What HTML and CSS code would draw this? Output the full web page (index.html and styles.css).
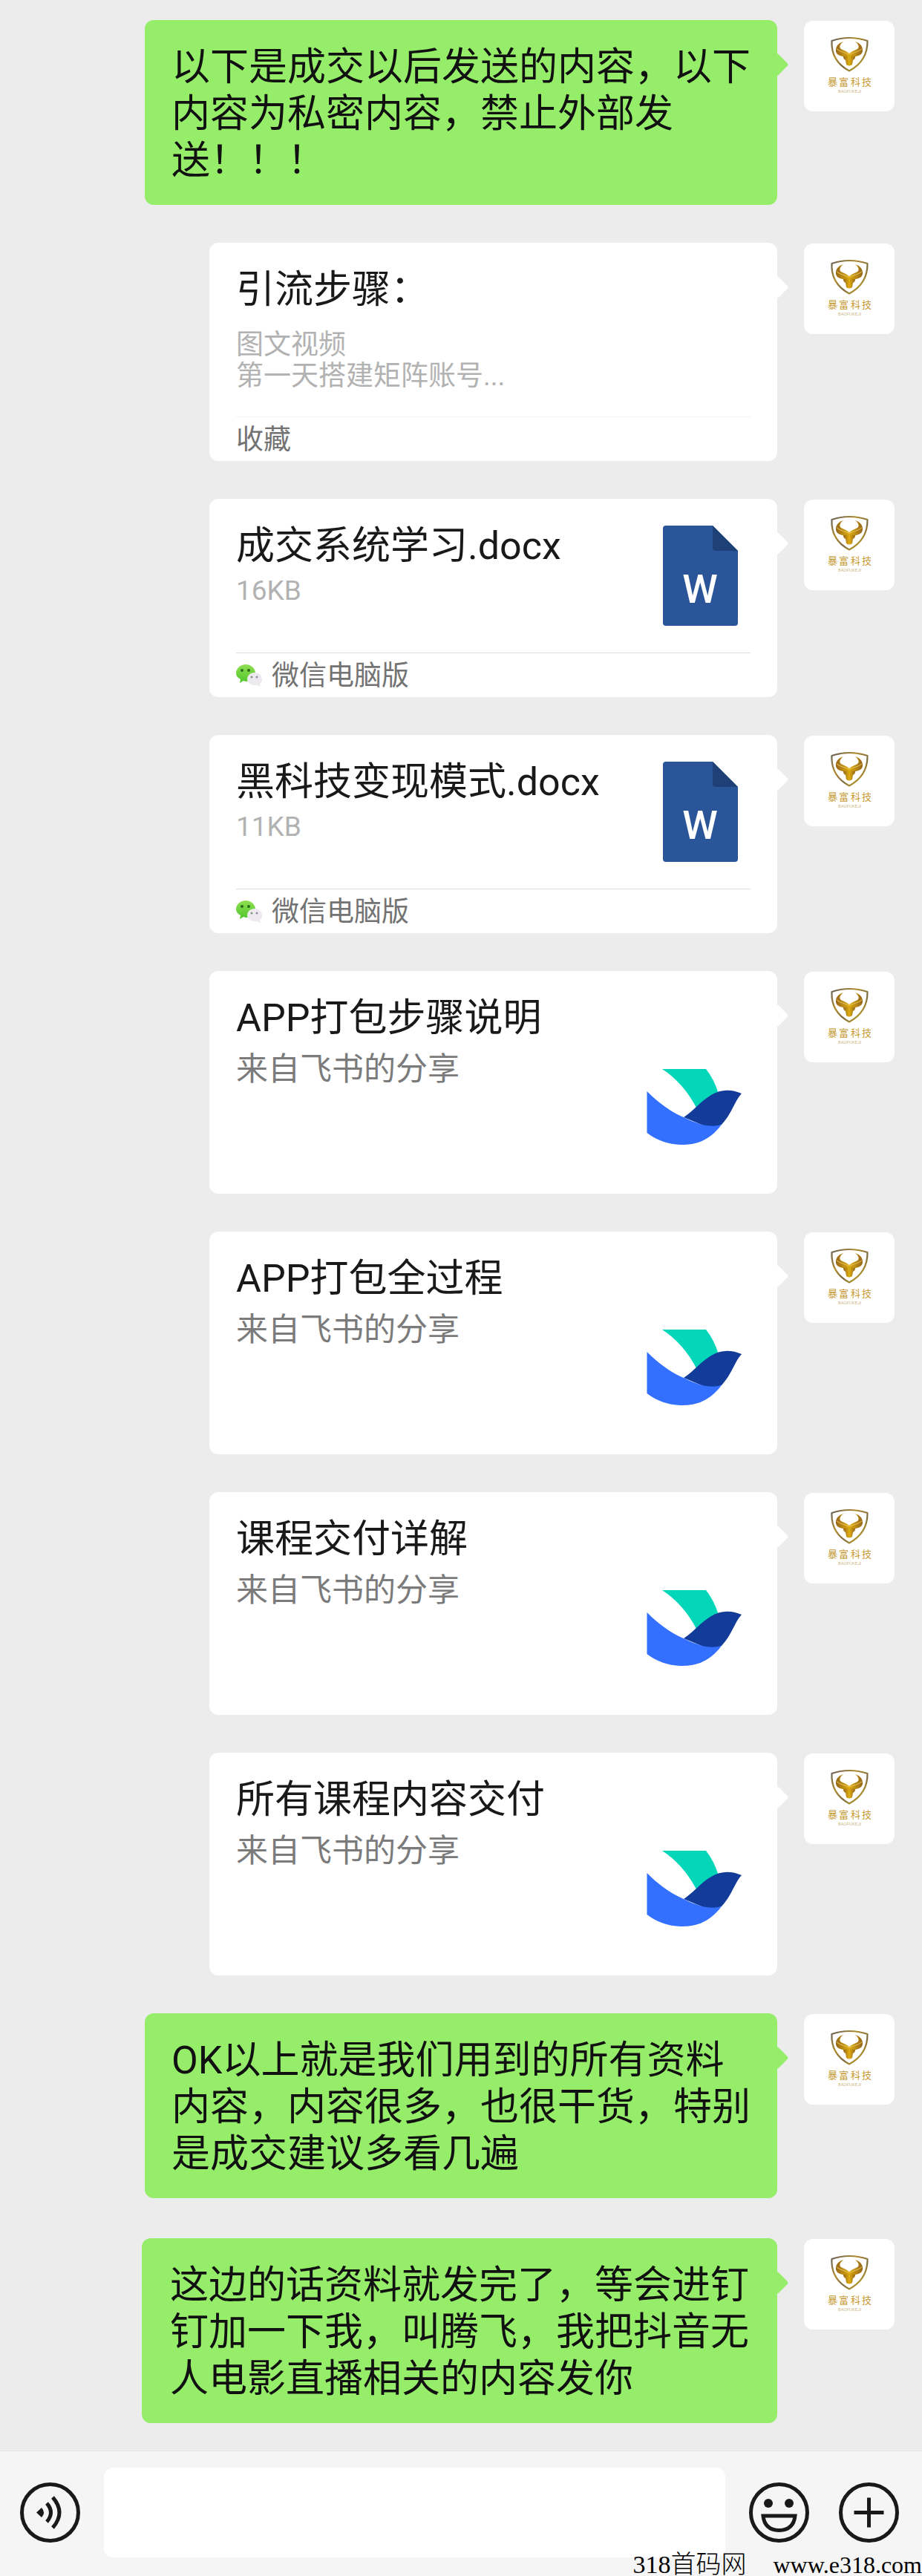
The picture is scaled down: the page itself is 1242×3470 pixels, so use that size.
FILE: index.html
```html
<!DOCTYPE html>
<html lang="zh-CN">
<head>
<meta charset="utf-8">
<meta name="viewport" content="width=device-width, initial-scale=1">
<title>聊天</title>
<link rel="stylesheet" href="styles.css">
</head>
<body>
<svg class="sprite" aria-hidden="true">
  <defs>
    <linearGradient id="gold-edge" x1="0" y1="0" x2="1" y2="1">
      <stop offset="0" stop-color="#66605a"/>
      <stop offset="0.35" stop-color="#b08a2c"/>
      <stop offset="0.6" stop-color="#7d6a40"/>
      <stop offset="1" stop-color="#e6c01c"/>
    </linearGradient>
    <linearGradient id="gold-fill" x1="0" y1="0" x2="1" y2="0">
      <stop offset="0" stop-color="#94651a"/>
      <stop offset="0.5" stop-color="#dfae12"/>
      <stop offset="1" stop-color="#94651a"/>
    </linearGradient>
    <linearGradient id="chat-green" x1="0" y1="0" x2="0" y2="1">
      <stop offset="0" stop-color="#8fe052"/>
      <stop offset="1" stop-color="#4fc62c"/>
    </linearGradient>
  </defs>
  <symbol id="bull" viewBox="0 0 122 122">
    <path d="M37.5 27Q61 19 85.500 27Q86 54 61 67.500Q36 54 37.500 27Z" fill="none" stroke="url(#gold-edge)" stroke-width="2.2" stroke-linejoin="round"/>
    <path d="M53 28C46 30 42.500 35 43 41C44 47 51 48 61 50C71 48 78 47 79 41C79.500 35 76 30 69 28C75 33 75 37 70 39C66 41 63 42 61 44C59 42 56 41 52 39C47 37 47 33 53 28Z" fill="url(#gold-fill)"/>
    <path d="M44 38C49 42 56 43 61 45C66 43 73 42 78 38" fill="none" stroke="#e9c55a" stroke-width="1"/>
    <path d="M53 48Q61 46 69 48Q69 52 66 53L65 59Q61 62 57 59L56 53Q53 52 53 48Z" fill="url(#gold-fill)"/>
  </symbol>
  <symbol id="word-file" viewBox="0 0 101 135">
    <path d="M4 0H67L101 34V131Q101 135 97 135H4Q0 135 0 131V4Q0 0 4 0Z" fill="#2a5699"/>
    <path d="M67 0L101 34H71Q67 34 67 30Z" fill="#1e4076"/>
  </symbol>
  <symbol id="wechat" viewBox="0 0 36 32">
    <path d="M13 0C20 0 26 5 26 12C26 18 20 23 13 23L10 22L5 25L6 20C2 18 0 15 0 12C0 5 6 0 13 0Z" fill="url(#chat-green)"/>
    <circle cx="8" cy="8" r="2" fill="#2c6b1a"/><circle cx="17" cy="8" r="2" fill="#2c6b1a"/>
    <path d="M25 11C31 11 35 15 35 20C35 23 34 25 32 26L33 30L28 28C21 29 15 25 15 20C15 15 19 11 25 11Z" fill="#eceaee"/>
    <circle cx="21" cy="17" r="1.5" fill="#8a9484"/><circle cx="28" cy="17" r="1.5" fill="#9a88a8"/>
  </symbol>
  <symbol id="lark" viewBox="0 0 150 150">
    <path d="M31 24H90Q101 38 106.5 56L77.5 77Q60 43 31 24Z" fill="#03d6b9"/>
    <path d="M60 89C76 78 82 68 97 59C110 51 124 51 138 57C128 68 125 84 111 99L96 104Z" fill="#133c9a"/>
    <path d="M10.5 54C25 69 43 82 61 89.5C82 100 97 103 111 99C92 124 72 126 56 126Q30 125 10.5 110Z" fill="#3370ff"/>
  </symbol>
</svg>

<main class="chat">
  <div class="message">
    <p class="bubble text">以下是成交以后发送的内容，以下内容为私密内容，禁止外部发送！！！</p>
    <svg class="avatar" viewBox="0 0 122 122"><use href="#bull"/><text class="avatar-name" x="32 47 63 78" y="87">暴富科技</text><text class="avatar-latin" x="46" y="97">BAOFUKEJI</text></svg>
  </div>

  <div class="message">
    <a class="bubble card" href="#note">
      <div class="note">
        <h2 class="title">引流步骤：</h2>
        <p class="meta">图文视频<br>第一天搭建矩阵账号...</p>
      </div>
      <div class="card-foot pale">收藏</div>
    </a>
    <svg class="avatar" viewBox="0 0 122 122"><use href="#bull"/><text class="avatar-name" x="32 47 63 78" y="87">暴富科技</text><text class="avatar-latin" x="46" y="97">BAOFUKEJI</text></svg>
  </div>

  <div class="message">
    <a class="bubble card" href="#file-1">
      <div class="file">
        <div>
          <h2 class="title">成交系统学习.docx</h2>
          <p class="meta">16KB</p>
        </div>
        <svg class="file-icon" viewBox="0 0 101 135"><use href="#word-file"/><text class="word-letter" x="50" y="104" text-anchor="middle">W</text></svg>
      </div>
      <div class="card-foot"><svg class="source-icon" aria-hidden="true"><use href="#wechat"/></svg>微信电脑版</div>
    </a>
    <svg class="avatar" viewBox="0 0 122 122"><use href="#bull"/><text class="avatar-name" x="32 47 63 78" y="87">暴富科技</text><text class="avatar-latin" x="46" y="97">BAOFUKEJI</text></svg>
  </div>

  <div class="message">
    <a class="bubble card" href="#file-2">
      <div class="file">
        <div>
          <h2 class="title">黑科技变现模式.docx</h2>
          <p class="meta">11KB</p>
        </div>
        <svg class="file-icon" viewBox="0 0 101 135"><use href="#word-file"/><text class="word-letter" x="50" y="104" text-anchor="middle">W</text></svg>
      </div>
      <div class="card-foot"><svg class="source-icon" aria-hidden="true"><use href="#wechat"/></svg>微信电脑版</div>
    </a>
    <svg class="avatar" viewBox="0 0 122 122"><use href="#bull"/><text class="avatar-name" x="32 47 63 78" y="87">暴富科技</text><text class="avatar-latin" x="46" y="97">BAOFUKEJI</text></svg>
  </div>

  <div class="message">
    <a class="bubble card share" href="#share-1">
      <div>
        <h2 class="title">APP打包步骤说明</h2>
        <p class="desc">来自飞书的分享</p>
      </div>
      <svg class="share-icon" aria-hidden="true"><use href="#lark"/></svg>
    </a>
    <svg class="avatar" viewBox="0 0 122 122"><use href="#bull"/><text class="avatar-name" x="32 47 63 78" y="87">暴富科技</text><text class="avatar-latin" x="46" y="97">BAOFUKEJI</text></svg>
  </div>

  <div class="message">
    <a class="bubble card share" href="#share-2">
      <div>
        <h2 class="title">APP打包全过程</h2>
        <p class="desc">来自飞书的分享</p>
      </div>
      <svg class="share-icon" aria-hidden="true"><use href="#lark"/></svg>
    </a>
    <svg class="avatar" viewBox="0 0 122 122"><use href="#bull"/><text class="avatar-name" x="32 47 63 78" y="87">暴富科技</text><text class="avatar-latin" x="46" y="97">BAOFUKEJI</text></svg>
  </div>

  <div class="message">
    <a class="bubble card share" href="#share-3">
      <div>
        <h2 class="title">课程交付详解</h2>
        <p class="desc">来自飞书的分享</p>
      </div>
      <svg class="share-icon" aria-hidden="true"><use href="#lark"/></svg>
    </a>
    <svg class="avatar" viewBox="0 0 122 122"><use href="#bull"/><text class="avatar-name" x="32 47 63 78" y="87">暴富科技</text><text class="avatar-latin" x="46" y="97">BAOFUKEJI</text></svg>
  </div>

  <div class="message">
    <a class="bubble card share" href="#share-4">
      <div>
        <h2 class="title">所有课程内容交付</h2>
        <p class="desc">来自飞书的分享</p>
      </div>
      <svg class="share-icon" aria-hidden="true"><use href="#lark"/></svg>
    </a>
    <svg class="avatar" viewBox="0 0 122 122"><use href="#bull"/><text class="avatar-name" x="32 47 63 78" y="87">暴富科技</text><text class="avatar-latin" x="46" y="97">BAOFUKEJI</text></svg>
  </div>

  <div class="message">
    <p class="bubble text">OK以上就是我们用到的所有资料内容，内容很多，也很干货，特别是成交建议多看几遍</p>
    <svg class="avatar" viewBox="0 0 122 122"><use href="#bull"/><text class="avatar-name" x="32 47 63 78" y="87">暴富科技</text><text class="avatar-latin" x="46" y="97">BAOFUKEJI</text></svg>
  </div>

  <div class="message latest">
    <p class="bubble text">这边的话资料就发完了，等会进钉钉加一下我，叫腾飞，我把抖音无人电影直播相关的内容发你</p>
    <svg class="avatar" viewBox="0 0 122 122"><use href="#bull"/><text class="avatar-name" x="32 47 63 78" y="87">暴富科技</text><text class="avatar-latin" x="46" y="97">BAOFUKEJI</text></svg>
  </div>
</main>

<form class="composer">
  <button class="tool" type="button" aria-label="语音">
    <svg viewBox="0 0 81 81" aria-hidden="true">
      <circle cx="40.5" cy="40.5" r="38" class="line"/>
      <path d="M22 40.5L29 34Q35 40.5 29 47Z" fill="#191919"/>
      <path d="M36 28Q47 40.5 36 53M44 20Q62 40.5 44 61" class="line"/>
    </svg>
  </button>
  <input class="entry" type="text" aria-label="输入消息">
  <div class="tools">
    <button class="tool" type="button" aria-label="表情">
      <svg viewBox="0 0 81 81" aria-hidden="true">
        <circle cx="40.5" cy="40.5" r="38" class="line"/>
        <circle cx="26" cy="28" r="6" fill="#191919"/><circle cx="54" cy="28" r="6" fill="#191919"/>
        <path d="M19 45H62Q60 64 40.5 64.5Q21 64 19 45Z" class="line"/>
      </svg>
    </button>
    <button class="tool" type="button" aria-label="更多">
      <svg viewBox="0 0 81 81" aria-hidden="true">
        <circle cx="40.5" cy="40.5" r="38" class="line"/>
        <path d="M40.5 20.5V60.5M20.5 40.5H60.5" class="line"/>
      </svg>
    </button>
  </div>
  <div class="watermark"><span>318首码网</span><span class="site">www.e318.com</span></div>
</form>
</body>
</html>
```
FILE: styles.css
```css
* {
  box-sizing: border-box;
}

body {
  margin: 0;
  min-height: 100vh;
  display: flex;
  flex-direction: column;
  background: #ececec;
  color: #191919;
  font-family: Roboto, "Noto Sans CJK SC", sans-serif;
  font-size: 52px;
}

h2,
p {
  margin: 0;
  font-size: inherit;
  font-weight: 400;
}

.sprite {
  position: absolute;
  width: 0;
  height: 0;
}

/* Conversation */
.chat {
  flex: 1;
  display: flex;
  flex-direction: column;
  gap: 51px;
  padding: 27px 37px 36px;
}

.message {
  display: flex;
  justify-content: flex-end;
  align-items: flex-start;
  gap: 36px;
}

.latest {
  margin-top: 3px;
}

.avatar {
  flex: none;
  width: 122px;
  height: 122px;
  margin-top: 1px;
  border-radius: 12px;
  background: #fff;
}

.avatar-name {
  font-size: 13px;
  fill: #c89b35;
}

.avatar-latin {
  font-size: 6px;
  fill: #cdb98a;
}

.bubble {
  position: relative;
  border-radius: 12px;
  background: #fff;
}

.bubble::after {
  content: "";
  position: absolute;
  top: 49px;
  right: -11px;
  width: 22px;
  height: 22px;
  border-radius: 3px;
  background: inherit;
  transform: rotate(45deg);
}

.text {
  max-width: 852px;
  padding: 32px 36px 28px;
  background: #95ed6a;
  color: #111;
  line-height: 63px;
}

.latest .text {
  max-width: 856px;
  padding: 32px 38px 28px;
}

/* Cards */
.card {
  width: 765px;
  padding: 0 36px;
  color: inherit;
  text-decoration: none;
}

.file {
  display: flex;
  justify-content: space-between;
  padding: 36px 17px 36px 0;
}

.note {
  padding: 32px 0 33px;
}

.title {
  line-height: 63px;
}

.meta {
  color: #b2b2b2;
  font-size: 37px;
  line-height: 42px;
}

.note .meta {
  padding-top: 22px;
}

.file .title {
  margin-top: -4px;
}

.file .meta {
  padding-top: 8px;
}

.card-foot {
  display: flex;
  align-items: center;
  gap: 12px;
  height: 60px;
  padding-top: 2px;
  border-top: 1px solid #dedede;
  color: #737373;
  font-size: 37px;
  line-height: 42px;
}

.pale {
  border-color: #f3f3f3;
}

.source-icon {
  width: 36px;
  height: 32px;
}

.file-icon {
  flex: none;
  width: 101px;
  height: 135px;
}

.word-letter {
  fill: #fff;
  font-size: 54px;
  font-weight: 500;
}

.share {
  display: flex;
  justify-content: space-between;
  align-items: flex-end;
  padding-top: 32px;
  padding-bottom: 42px;
}

.share > div {
  align-self: stretch;
  min-height: 226px;
}

.desc {
  padding-top: 10px;
  color: #7b7b7b;
  font-size: 43px;
  line-height: 54px;
}

.share-icon {
  flex: none;
  width: 150px;
  height: 150px;
}

/* Message composer */
.composer {
  position: relative;
  display: flex;
  align-items: center;
  gap: 32px;
  padding: 22px 31px 25px 27px;
  border-top: 1px solid #e2e2e2;
  background: #f5f5f5;
}

.entry {
  flex: 1;
  min-width: 0;
  height: 121px;
  padding: 0 24px;
  border: 0;
  border-radius: 12px;
  background: #fff;
  color: inherit;
  font: inherit;
}

.tools {
  display: flex;
  gap: 40px;
}

.tool {
  flex: none;
  width: 81px;
  height: 81px;
  padding: 0;
  border: 0;
  background: none;
}

.tool svg {
  display: block;
}

.line {
  fill: none;
  stroke: #191919;
  stroke-width: 5;
}

.watermark {
  position: absolute;
  right: 0;
  bottom: 0;
  display: flex;
  align-items: baseline;
  gap: 36px;
  color: #000;
  font-family: "Liberation Serif", "Noto Sans CJK SC", serif;
  font-size: 34px;
  font-weight: 300;
  line-height: 30px;
}

.site {
  font-size: 32px;
}
```
